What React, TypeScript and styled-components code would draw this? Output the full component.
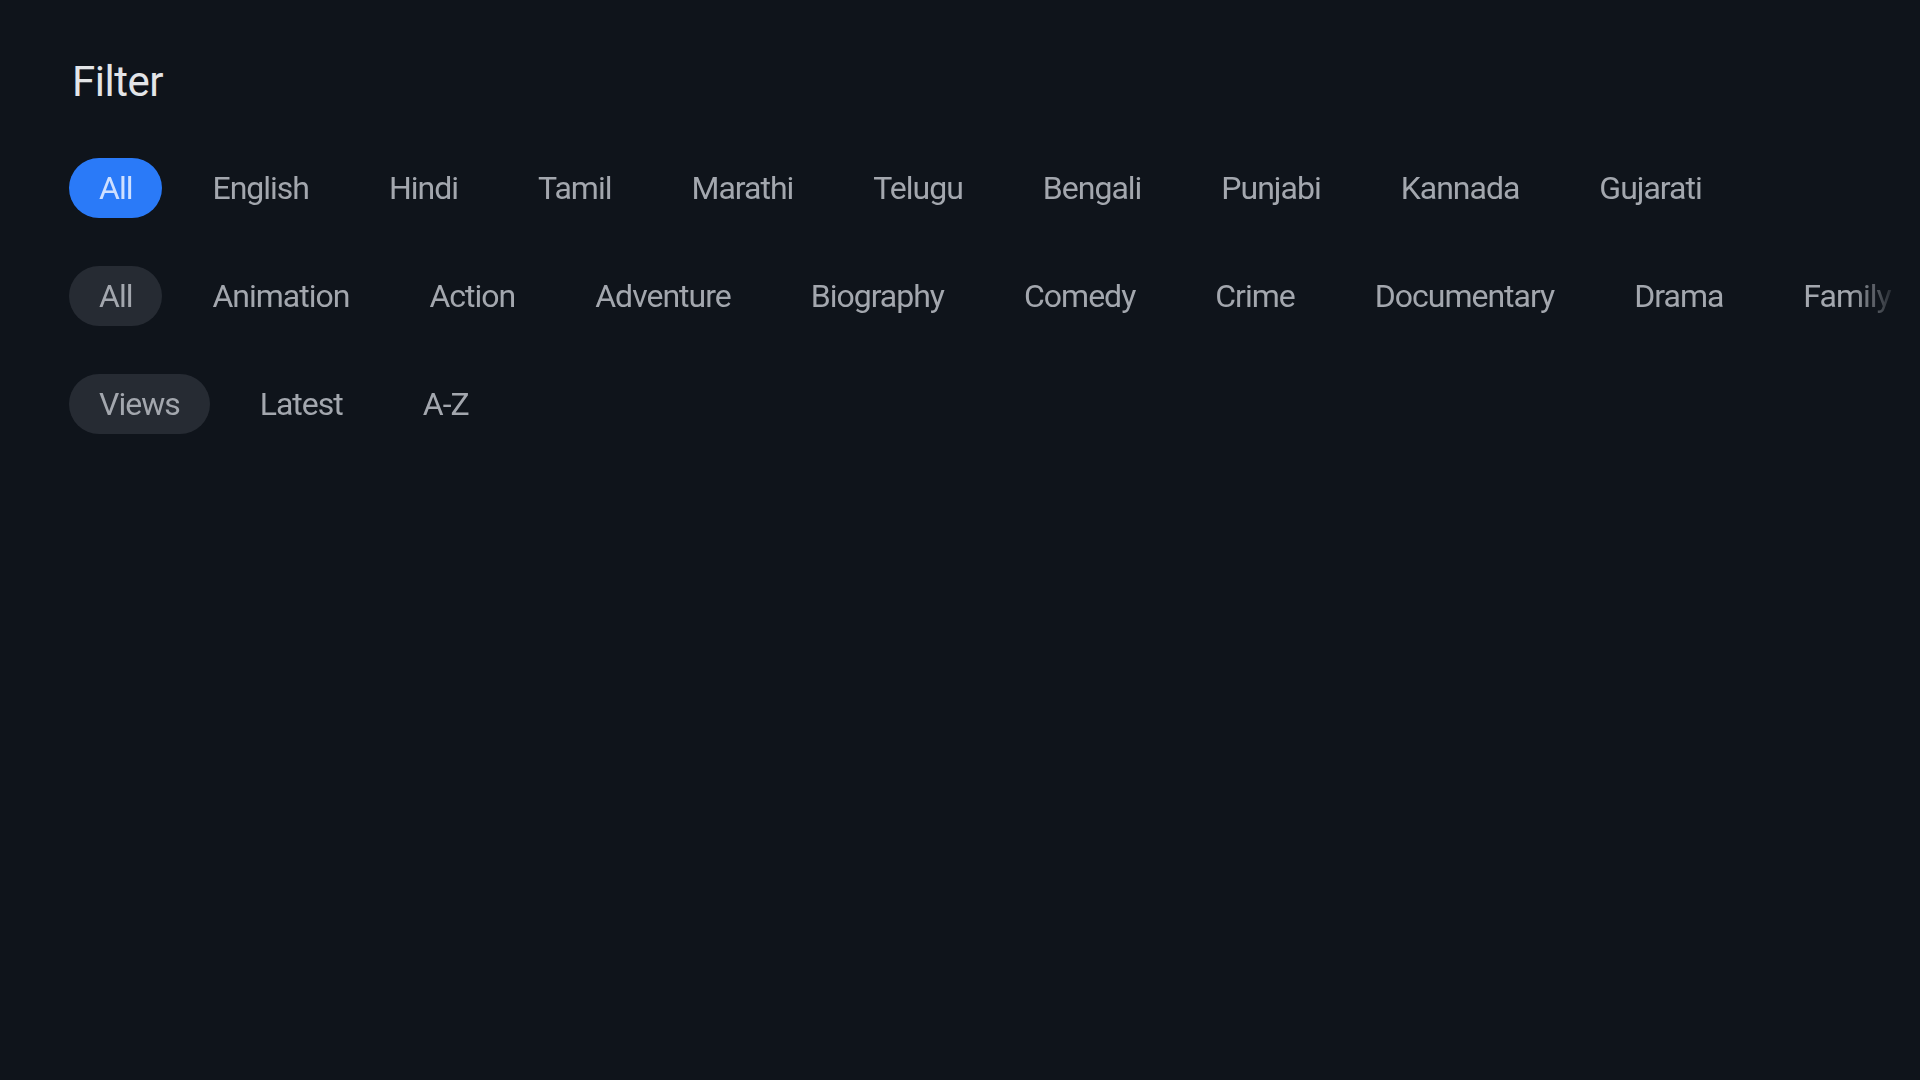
import styled, { createGlobalStyle } from "styled-components";

const GlobalStyle = createGlobalStyle`
  html, body {
    margin: 0;
    padding: 0;
    background: #0f141b;
  }
  body {
    font-family: Roboto, "Noto Sans", "Liberation Sans", sans-serif;
  }
`;

const Page = styled.div`
  width: 1920px;
  height: 1080px;
  box-sizing: border-box;
  padding: 57px 0 0 69px;
  background: #0f141b;
  overflow: hidden;
  display: flex;
  flex-direction: column;
`;

const Title = styled.h1`
  margin: 0 0 51px 3px;
  font-size: 42px;
  line-height: 50px;
  font-weight: 400;
  letter-spacing: -0.5px;
  color: #e3e5e8;
`;

const Rows = styled.div`
  display: flex;
  flex-direction: column;
  gap: 48px;
`;

const ChipRow = styled.div`
  display: flex;
  gap: 20px;
  width: 1831px;
  overflow: hidden;
  -webkit-mask-image: linear-gradient(to right, #000 calc(100% - 50px), transparent);
  mask-image: linear-gradient(to right, #000 calc(100% - 50px), transparent);
`;

const Chip = styled.div<{ $selected?: boolean; $tone?: "accent" | "muted" }>`
  flex: 0 0 auto;
  height: 60px;
  padding: 0 30px;
  border-radius: 30px;
  display: flex;
  align-items: center;
  font-size: 32px;
  line-height: 1;
  letter-spacing: -1px;
  white-space: nowrap;
  color: ${(p) => (p.$selected && p.$tone === "accent" ? "#cfe0ff" : "#a3a7ae")};
  background: ${(p) =>
    !p.$selected ? "transparent" : p.$tone === "accent" ? "#2a7af8" : "#262b33"};
`;

const languages = ["All", "English", "Hindi", "Tamil", "Marathi", "Telugu", "Bengali", "Punjabi", "Kannada", "Gujarati"];
const genres = ["All", "Animation", "Action", "Adventure", "Biography", "Comedy", "Crime", "Documentary", "Drama", "Family"];
const sorts = ["Views", "Latest", "A-Z"];

export default function App() {
  return (
    <>
      <GlobalStyle />
      <Page>
        <Title>Filter</Title>
        <Rows>
          <ChipRow>
            {languages.map((l, i) => (
              <Chip key={l} $selected={i === 0} $tone="accent">
                {l}
              </Chip>
            ))}
          </ChipRow>
          <ChipRow>
            {genres.map((g, i) => (
              <Chip key={g} $selected={i === 0} $tone="muted">
                {g}
              </Chip>
            ))}
          </ChipRow>
          <ChipRow>
            {sorts.map((s, i) => (
              <Chip key={s} $selected={i === 0} $tone="muted">
                {s}
              </Chip>
            ))}
          </ChipRow>
        </Rows>
      </Page>
    </>
  );
}
